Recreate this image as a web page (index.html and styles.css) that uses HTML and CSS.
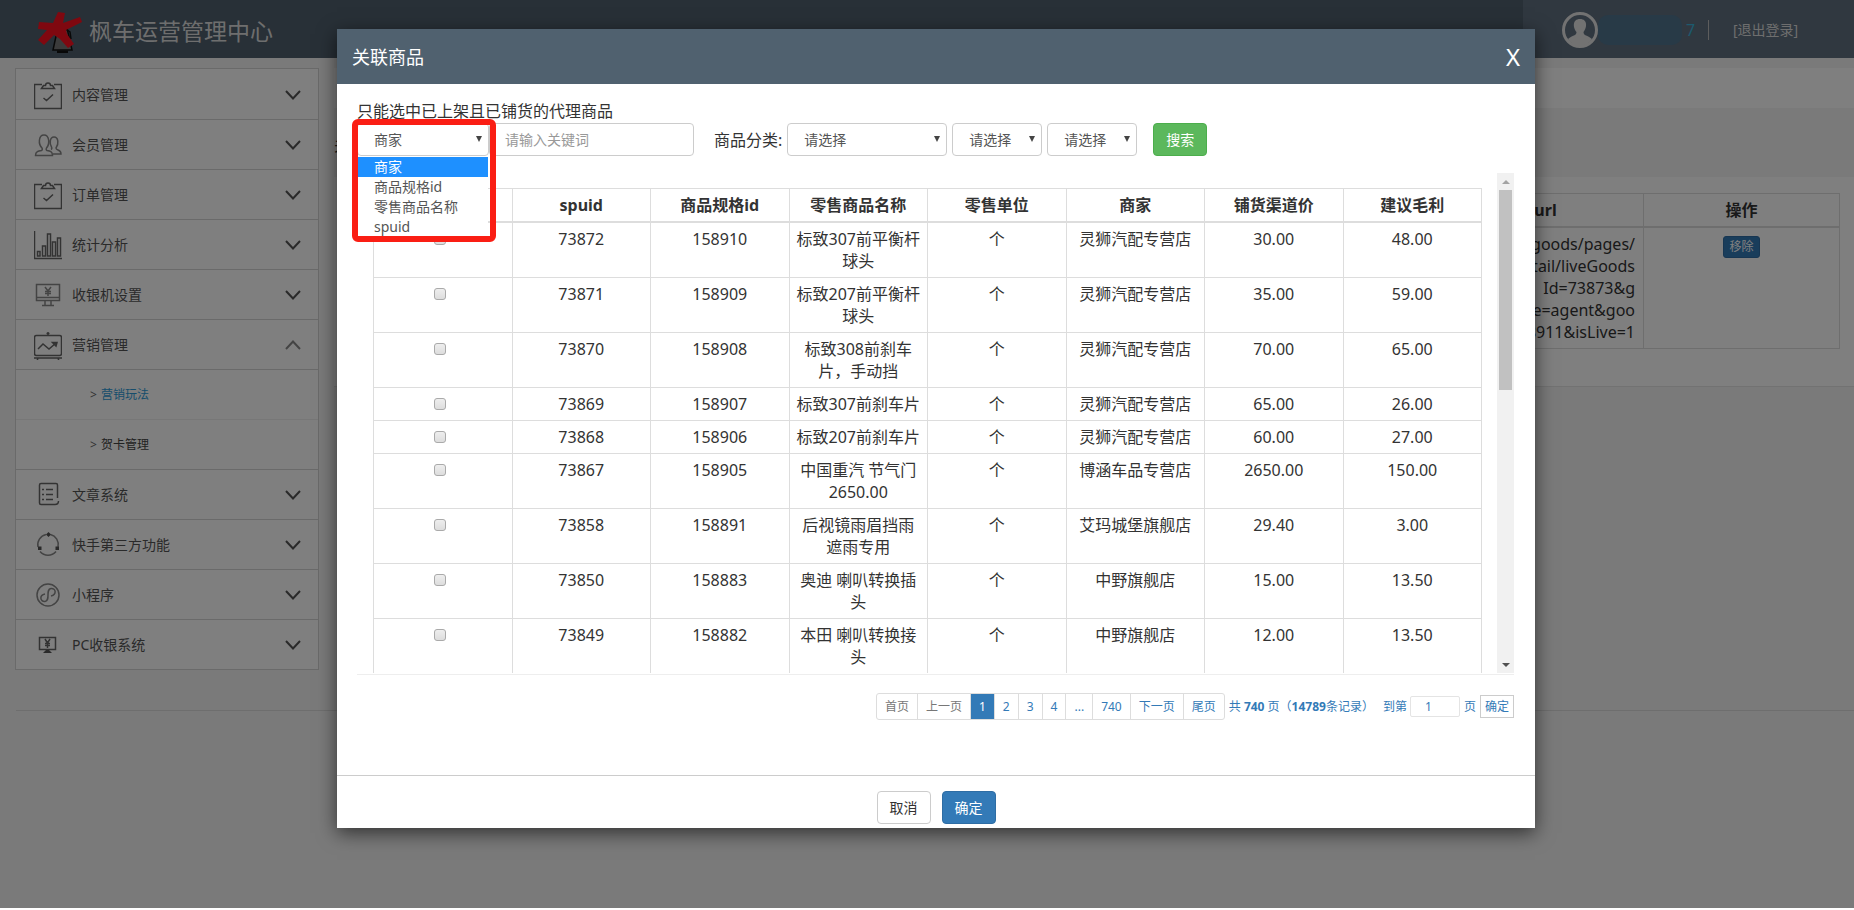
FILE: index.html
```html
<!DOCTYPE html>
<html lang="zh-CN">
<head>
<meta charset="utf-8">
<title>枫车运营管理中心</title>
<link rel="stylesheet" href="styles.css">
</head>
<body>
<svg class="sprite" aria-hidden="true">
  <symbol id="i-clip" viewBox="0 0 28 28"><path d="M8 3.500H.5v24h27v-24H20M7.500 7.500 9.500 4.500h2C11.500 1 16.500 1 16.500 4.500h2L20.500 7.500zM9.500 17l3 2.500 6.500-6"/></symbol>
  <symbol id="i-users" viewBox="0 0 28 28"><path d="M1.500 24.500c0-4 3-4.500 6-5 1-.5 1-1.500.5-2.500C4 13 4.500 4 10 4s6 9 2.500 13c-.5 1-.5 2 .5 2.500 3 .5 5.500 1 5.500 5zM17 18.500c1-.5 1-1.500.5-2.500-2-3-2-10 2.500-10s5 7 2 11c0 3 5 1 5 6h-8"/></symbol>
  <symbol id="i-bars" viewBox="0 0 28 28"><path d="M.5 0v27.500H28M3.500 25v-4.500h2.500V25zM8.500 25V15h3v10zM13.500 25V3h3v22zM18.500 25V11h3v14zM23.500 25V7h3v18z"/></symbol>
  <symbol id="i-screen" viewBox="0 0 28 28"><path d="M2.500 3.500h23v16h-23zM2.500 16.500h23M11 20v4M17 20v4M8 24.500h12M11 6l3 4 3-4M14 10v5M11 10.500h6M11 12.500h6"/></symbol>
  <symbol id="i-board" viewBox="0 0 28 28"><rect x=".5" y="4.500" width="27" height="20" rx="2"/><path d="M0 27h28M4 27l-1 3M24 27l1 3M4 18l5-5 6 5 7-6M18.500 11.500l4.500 0-1 3.500zM14 1v3M12.500 2.500h3"/></symbol>
  <symbol id="i-doc" viewBox="0 0 28 28"><path d="M23.500 17V4c0-1-.5-1.500-1.500-1.500H7C6 2.500 5.500 3 5.500 4v18c0 1 .5 1.500 1.500 1.500h14c2 0 3.500-1 3.500-3.500M12 8.500h7M12 13.500h7M12 18.500h7M8 8.500h2M8 13.500h2M8 18.500h2"/></symbol>
  <symbol id="i-ring" viewBox="0 0 28 28"><path d="M12 3.500A10.500 10.500 0 0 0 4 16M16.500 3.500A10.500 10.500 0 0 1 24 16M6 20.500a10.500 10.500 0 0 0 16 0"/><path class="solid" d="M14.500 1l2.500 2.500L14.500 6 12 3.500zM4 15.500h3.500V19H4zM21.500 15.500H25V19h-3.500z"/></symbol>
  <symbol id="i-mini" viewBox="0 0 28 28"><circle cx="14" cy="14" r="11"/><path d="M11 13c-6 1-5 8 0 7.500 3-.5 3-3 3-6.500s0-6 3-6.500c5-.5 6 6 0 7.500"/></symbol>
  <symbol id="i-pc" viewBox="0 0 28 28"><path d="M5.500 6.500h16v12h-16zM11 8l2.500 4L16 8M13.500 12v5M11 12.500h5M11 14.500h5"/><path class="solid" d="M12 19h3l3 3H9z"/></symbol>
  <symbol id="i-down" viewBox="0 0 16 10"><path d="M1 1l7 7.500L15 1"/></symbol>
  <symbol id="i-up" viewBox="0 0 16 10"><path d="M1 9l7-7.500L15 9"/></symbol>
</svg>

<header class="topbar">
  <div class="brand">
    <svg class="logo" viewBox="0 0 44 44" aria-hidden="true">
      <path d="M20 18 15 41h19L29 19z" fill="#777" stroke="#111" stroke-width="1.500"/>
      <path d="M26 19l6 4 1 7" fill="none" stroke="#111" stroke-width="1.500"/>
      <path d="M19 43h11" stroke="#111" stroke-width="3"/>
      <path d="M20 3l7 1-2 10 17-6 2 5-16 8 1 4 7 10-6 4-8-9-6-4-10 10-6-5 9-10-9-1 1-7 14 1z" fill="#ff1020"/>
    </svg>
    <span>枫车运营管理中心</span>
  </div>
  <div class="user">
    <svg class="avatar" viewBox="0 0 36 36" aria-hidden="true"><circle cx="18" cy="18" r="16.500" fill="none" stroke="#e4e4e4" stroke-width="3"/><path d="M18 7c8 0 7 9 3.500 13 0 4 4 3 8.500 7-5 9-19 9-24 0 4.500-4 8.500-3 8.500-7C11 16 10 7 18 7z" fill="#e4e4e4"/></svg>
    <span class="user-mask"></span>
    <span class="user-name">7</span>
    <a class="logout" href="#">[退出登录]</a>
  </div>
</header>

<div class="page">
  <nav class="side">
    <a class="item" href="#"><svg class="ico"><use href="#i-clip"/></svg><span>内容管理</span><svg class="chev"><use href="#i-down"/></svg></a>
    <a class="item" href="#"><svg class="ico light"><use href="#i-users"/></svg><span>会员管理</span><svg class="chev"><use href="#i-down"/></svg></a>
    <a class="item" href="#"><svg class="ico"><use href="#i-clip"/></svg><span>订单管理</span><svg class="chev"><use href="#i-down"/></svg></a>
    <a class="item" href="#"><svg class="ico"><use href="#i-bars"/></svg><span>统计分析</span><svg class="chev"><use href="#i-down"/></svg></a>
    <a class="item" href="#"><svg class="ico light"><use href="#i-screen"/></svg><span>收银机设置</span><svg class="chev"><use href="#i-down"/></svg></a>
    <a class="item" href="#"><svg class="ico"><use href="#i-board"/></svg><span>营销管理</span><svg class="chev light"><use href="#i-up"/></svg></a>
    <a class="sub active" href="#"><i>&gt;</i>营销玩法</a>
    <a class="sub last" href="#"><i>&gt;</i>贺卡管理</a>
    <a class="item" href="#"><svg class="ico"><use href="#i-doc"/></svg><span>文章系统</span><svg class="chev"><use href="#i-down"/></svg></a>
    <a class="item" href="#"><svg class="ico light"><use href="#i-ring"/></svg><span>快手第三方功能</span><svg class="chev"><use href="#i-down"/></svg></a>
    <a class="item" href="#"><svg class="ico light"><use href="#i-mini"/></svg><span>小程序</span><svg class="chev"><use href="#i-down"/></svg></a>
    <a class="item" href="#"><svg class="ico"><use href="#i-pc"/></svg><span>PC收银系统</span><svg class="chev"><use href="#i-down"/></svg></a>
  </nav>
  <main class="main">
    <div class="crumbs"></div>
    <div class="main-label">关联商品：</div>
    <div class="panel">
      <table class="links">
        <thead><tr><th class="wide"></th><th class="url">url</th><th class="op">操作</th></tr></thead>
        <tbody><tr><td></td><td class="url">goods/pages/<br>detail/liveGoods<br>Id=73873&amp;g<br>type=agent&amp;goo<br>158911&amp;isLive=1</td><td><button class="remove" type="button">移除</button></td></tr></tbody>
      </table>
    </div>
  </main>
</div>
<hr class="bottom-line">

<div class="overlay">
  <section class="modal" role="dialog" aria-labelledby="dlg-title">
    <header class="modal-head"><h1 id="dlg-title">关联商品</h1><button class="close" type="button" aria-label="关闭">X</button></header>
    <div class="modal-body">
      <p class="tip">只能选中已上架且已铺货的代理商品</p>
      <form class="filters">
        <div class="drop w-type">
          <select aria-label="搜索类型"><option>商家</option><option>商品规格id</option><option>零售商品名称</option><option>spuid</option></select>
          <ul class="menu" role="listbox"><li class="on" role="option">商家</li><li role="option">商品规格id</li><li role="option">零售商品名称</li><li role="option">spuid</li></ul>
          <span class="mark"></span>
        </div>
        <input class="keyword" type="text" placeholder="请输入关键词" aria-label="关键词">
        <label for="cat1">商品分类:</label>
        <div class="drop w-big"><select id="cat1"><option>请选择</option></select></div>
        <div class="drop w-small"><select aria-label="二级分类"><option>请选择</option></select></div>
        <div class="drop w-small"><select aria-label="三级分类"><option>请选择</option></select></div>
        <button class="btn green" type="button">搜索</button>
      </form>
      <div class="scroller">
        <div class="list">
          <table class="goods">
            <thead><tr><th></th><th>spuid</th><th>商品规格id</th><th>零售商品名称</th><th>零售单位</th><th>商家</th><th>铺货渠道价</th><th>建议毛利</th></tr></thead>
            <tbody>
              <tr><td><input type="checkbox" aria-label="73872"></td><td>73872</td><td>158910</td><td>标致307前平衡杆球头</td><td>个</td><td>灵狮汽配专营店</td><td>30.00</td><td>48.00</td></tr>
              <tr><td><input type="checkbox" aria-label="73871"></td><td>73871</td><td>158909</td><td>标致207前平衡杆球头</td><td>个</td><td>灵狮汽配专营店</td><td>35.00</td><td>59.00</td></tr>
              <tr><td><input type="checkbox" aria-label="73870"></td><td>73870</td><td>158908</td><td>标致308前刹车片，手动挡</td><td>个</td><td>灵狮汽配专营店</td><td>70.00</td><td>65.00</td></tr>
              <tr><td><input type="checkbox" aria-label="73869"></td><td>73869</td><td>158907</td><td>标致307前刹车片</td><td>个</td><td>灵狮汽配专营店</td><td>65.00</td><td>26.00</td></tr>
              <tr><td><input type="checkbox" aria-label="73868"></td><td>73868</td><td>158906</td><td>标致207前刹车片</td><td>个</td><td>灵狮汽配专营店</td><td>60.00</td><td>27.00</td></tr>
              <tr><td><input type="checkbox" aria-label="73867"></td><td>73867</td><td>158905</td><td>中国重汽 节气门 2650.00</td><td>个</td><td>博涵车品专营店</td><td>2650.00</td><td>150.00</td></tr>
              <tr><td><input type="checkbox" aria-label="73858"></td><td>73858</td><td>158891</td><td>后视镜雨眉挡雨遮雨专用</td><td>个</td><td>艾玛城堡旗舰店</td><td>29.40</td><td>3.00</td></tr>
              <tr><td><input type="checkbox" aria-label="73850"></td><td>73850</td><td>158883</td><td>奥迪 喇叭转换插头</td><td>个</td><td>中野旗舰店</td><td>15.00</td><td>13.50</td></tr>
              <tr><td><input type="checkbox" aria-label="73849"></td><td>73849</td><td>158882</td><td>本田 喇叭转换接头</td><td>个</td><td>中野旗舰店</td><td>12.00</td><td>13.50</td></tr>
            </tbody>
          </table>
        </div>
        <div class="bar" aria-hidden="true"><span class="arrow up"></span><span class="thumb"></span><span class="arrow down"></span></div>
      </div>
      <div class="pager">
        <nav class="pages"><a class="off" href="#">首页</a><a class="off" href="#">上一页</a><a class="cur" href="#">1</a><a href="#">2</a><a href="#">3</a><a href="#">4</a><a href="#">...</a><a href="#">740</a><a href="#">下一页</a><a href="#">尾页</a></nav>
        <span>共 <b>740</b> 页（<b>14789</b>条记录）</span>
        <label class="goto" for="goto">到第</label>
        <input id="goto" type="text" value="1">
        <span class="unit">页</span>
        <button type="button">确定</button>
      </div>
    </div>
    <footer class="modal-foot"><button class="btn" type="button">取消</button><button class="btn blue" type="button">确定</button></footer>
  </section>
</div>
</body>
</html>
```
FILE: styles.css
```css
* { box-sizing: border-box; }
body { margin: 0; position: relative; min-height: 100vh; overflow: hidden; background: #fff; color: #333; font: 16px/22px "Noto Sans", "Noto Sans CJK SC", sans-serif; font-weight: 400; }
body::before { content: ""; position: absolute; inset: 0 0 2px; background: #f4f4f4; z-index: -1; }
a { color: inherit; text-decoration: none; }
button, input, select { font: inherit; color: inherit; }
button { cursor: pointer; }
.sprite { position: absolute; width: 0; height: 0; }

.topbar { display: flex; justify-content: space-between; height: 58px; background: #50606e; }
.brand { display: flex; align-items: center; gap: 7px; padding: 3px 0 0 38px; color: #ddd; font-size: 23px; line-height: 32px; }
.logo { width: 44px; height: 44px; }
.user { display: flex; align-items: center; width: 331px; padding: 2px 0 0 39px; background: #607080; font-size: 14px; }
.avatar { width: 36px; height: 36px; flex: none; }
.user-mask { width: 84px; height: 30px; border-radius: 10px; background: #50748e; }
.user-name { margin-left: 4px; width: 22px; color: #3ab4dc; font-size: 16px; }
.logout { padding-left: 24px; border-left: 1px solid #bbb; line-height: 20px; color: #ddd; }

.page { display: flex; align-items: flex-start; gap: 15px; padding: 10px 0 0 15px; }
.side { width: 304px; padding-top: 1px; background: #fff; border: 1px solid #d4d4d4; border-bottom: 0; }
.item { display: flex; align-items: center; height: 50px; padding: 0 17px 0 18px; border-bottom: 1px solid #d4d4d4; font-size: 14px; color: #555; }
.ico { width: 28px; height: 30px; margin-right: 10px; overflow: visible; fill: none; stroke: #666; stroke-width: 1.500; }
.ico.light, .chev.light { stroke: #888; }
.solid { fill: #555; stroke: none; }
.chev { width: 16px; height: 10px; margin-left: auto; fill: none; stroke: #555; stroke-width: 2; }
.sub { display: flex; align-items: center; gap: 4px; height: 50px; padding-left: 74px; border-bottom: 1px solid #eee; font-size: 12px; color: #444; }
.sub.last { border-bottom-color: #d4d4d4; }
.sub i { font-style: normal; color: #666; }
.sub.active { color: #2d9bd8; }
.main { flex: 1; }
.crumbs { height: 40px; background: #fff; }
.main-label { height: 69px; padding-top: 26px; }
.panel { padding: 16px 14px 37px 15px; background: #fff; border-bottom: 1px solid #e4e4e4; }
.links { width: 100%; table-layout: fixed; border-collapse: collapse; }
.links th, .links td { padding: 5px 8px; border: 1px solid #ddd; text-align: center; vertical-align: top; }
.links th { border-bottom-width: 2px; }
.links .op, .links .url { width: 196px; }
.links td.url { text-align: right; }
.remove { display: block; margin: 3px auto 0; padding: 0 5px; height: 22px; border: 1px solid #2e6da4; border-radius: 3px; background: #337ab7; color: #fff; font-size: 12px; line-height: 18px; }
.bottom-line { margin: 40px 0 0 16px; border: 0; border-top: 1px solid #ddd; }

.overlay { position: absolute; inset: 0 0 2px; padding: 29px 319px 0 337px; overflow: hidden; background: rgba(0, 0, 0, .5); }
.modal { background: #fff; box-shadow: 0 5px 18px rgba(0, 0, 0, .6); }
.modal-head { display: flex; align-items: center; justify-content: space-between; height: 55px; padding: 0 15px; background: #50616f; color: #fff; }
.modal-head h1 { margin: 0; font-size: 18px; font-weight: 400; }
.close { padding: 0; border: 0; background: none; font-size: 24px; line-height: 24px; }
.close, .btn.green, .btn.blue { color: #fff; }
.modal-body { padding: 16px 21px 0 20px; }
.tip { margin: 0 0 1px; }
.filters { display: flex; align-items: center; height: 33px; }
.filters label { margin: 0 5px 0 20px; }
.drop { position: relative; height: 33px; font-size: 14px; }
.drop + .drop { margin-left: 5px; }
.drop select { appearance: none; width: 100%; height: 33px; padding: 0 16px; border: 1px solid #ccc; border-radius: 4px; background: #fff; color: #555; }
.drop::after { content: ""; position: absolute; right: 7px; top: 13px; border: 3px solid transparent; border-top: 6px solid #444; border-bottom: 0; }
.w-type { width: 132px; }
.w-big { width: 160px; }
.w-small { width: 90px; }
.menu { position: absolute; top: 34px; left: 1px; right: 1px; z-index: 2; margin: 0; padding: 0; list-style: none; background: #fff; color: #555; line-height: 20px; }
.menu li { padding: 0 16px; }
.menu .on { background: #1e90ff; color: #fff; }
.mark { position: absolute; top: -4px; left: -5px; width: 144px; height: 123px; z-index: 3; border: 6px solid #fa1e14; border-radius: 6px; pointer-events: none; }
.keyword { width: 205px; height: 33px; padding: 0 15px; border: 1px solid #ccc; border-radius: 4px; background: #fff; font-size: 14px; }
.keyword::placeholder { color: #999; }
.btn { height: 33px; padding: 0 12px; border: 1px solid #ccc; border-radius: 4px; background: #fff; font-size: 14px; line-height: 20px; }
.btn.green { margin-left: 16px; border-color: #4cae4c; background: #5cb85c; }
.btn.blue { border-color: #2e6da4; background: #337ab7; }

.scroller { display: flex; justify-content: space-between; height: 502px; margin-top: 17px; border-bottom: 1px solid #eee; }
.list { flex: 1; height: 500px; padding: 15px 15px 0 16px; overflow: hidden; }
.goods { width: 100%; table-layout: fixed; border-collapse: collapse; }
.goods th, .goods td { padding: 5px; border: 1px solid #ddd; text-align: center; vertical-align: top; }
.goods th { border-bottom-width: 2px; }
.goods input { appearance: none; display: block; width: 12px; height: 12px; margin: 5px auto 0; border: 1px solid #aaa; border-radius: 3px; background: linear-gradient(#eee, #ddd); }
.goods td:first-child { padding-right: 10px; }
.bar { display: flex; flex-direction: column; align-items: center; width: 17px; height: 500px; background: #f1f1f1; }
.arrow { height: 17px; display: flex; align-items: center; }
.arrow::before { content: ""; border: 4px solid transparent; }
.arrow.up::before { border-bottom-color: #a3a3a3; border-top: 0; }
.arrow.down { margin-top: auto; }
.arrow.down::before { border-top-color: #505050; border-bottom: 0; }
.thumb { width: 13px; height: 200px; background: #c1c1c1; }

.pager { display: flex; align-items: center; justify-content: flex-end; height: 27px; margin-top: 18px; color: #337ab7; font-size: 12px; line-height: 17px; }
.pages { display: flex; margin-right: 4px; border: 1px solid #ddd; border-radius: 3px; }
.pages a { padding: 4px 8px; border-left: 1px solid #ddd; }
.pages a:first-child { border-left: 0; }
.pages .off { color: #777; }
.pages .cur { background: #337ab7; color: #fff; }
.goto { margin: 0 3px 0 9px; }
.pager input { width: 50px; height: 21px; padding: 0 14px; border: 1px solid #e4e4e4; border-radius: 2px; }
.unit { margin: 0 4px; }
.pager button { height: 23px; padding: 0 4px; border: 1px solid #ccc; background: #fff; }
.modal-foot { display: flex; justify-content: center; gap: 11px; margin-top: 55px; padding: 15px 0 4px; border-top: 1px solid #ccc; }
```
